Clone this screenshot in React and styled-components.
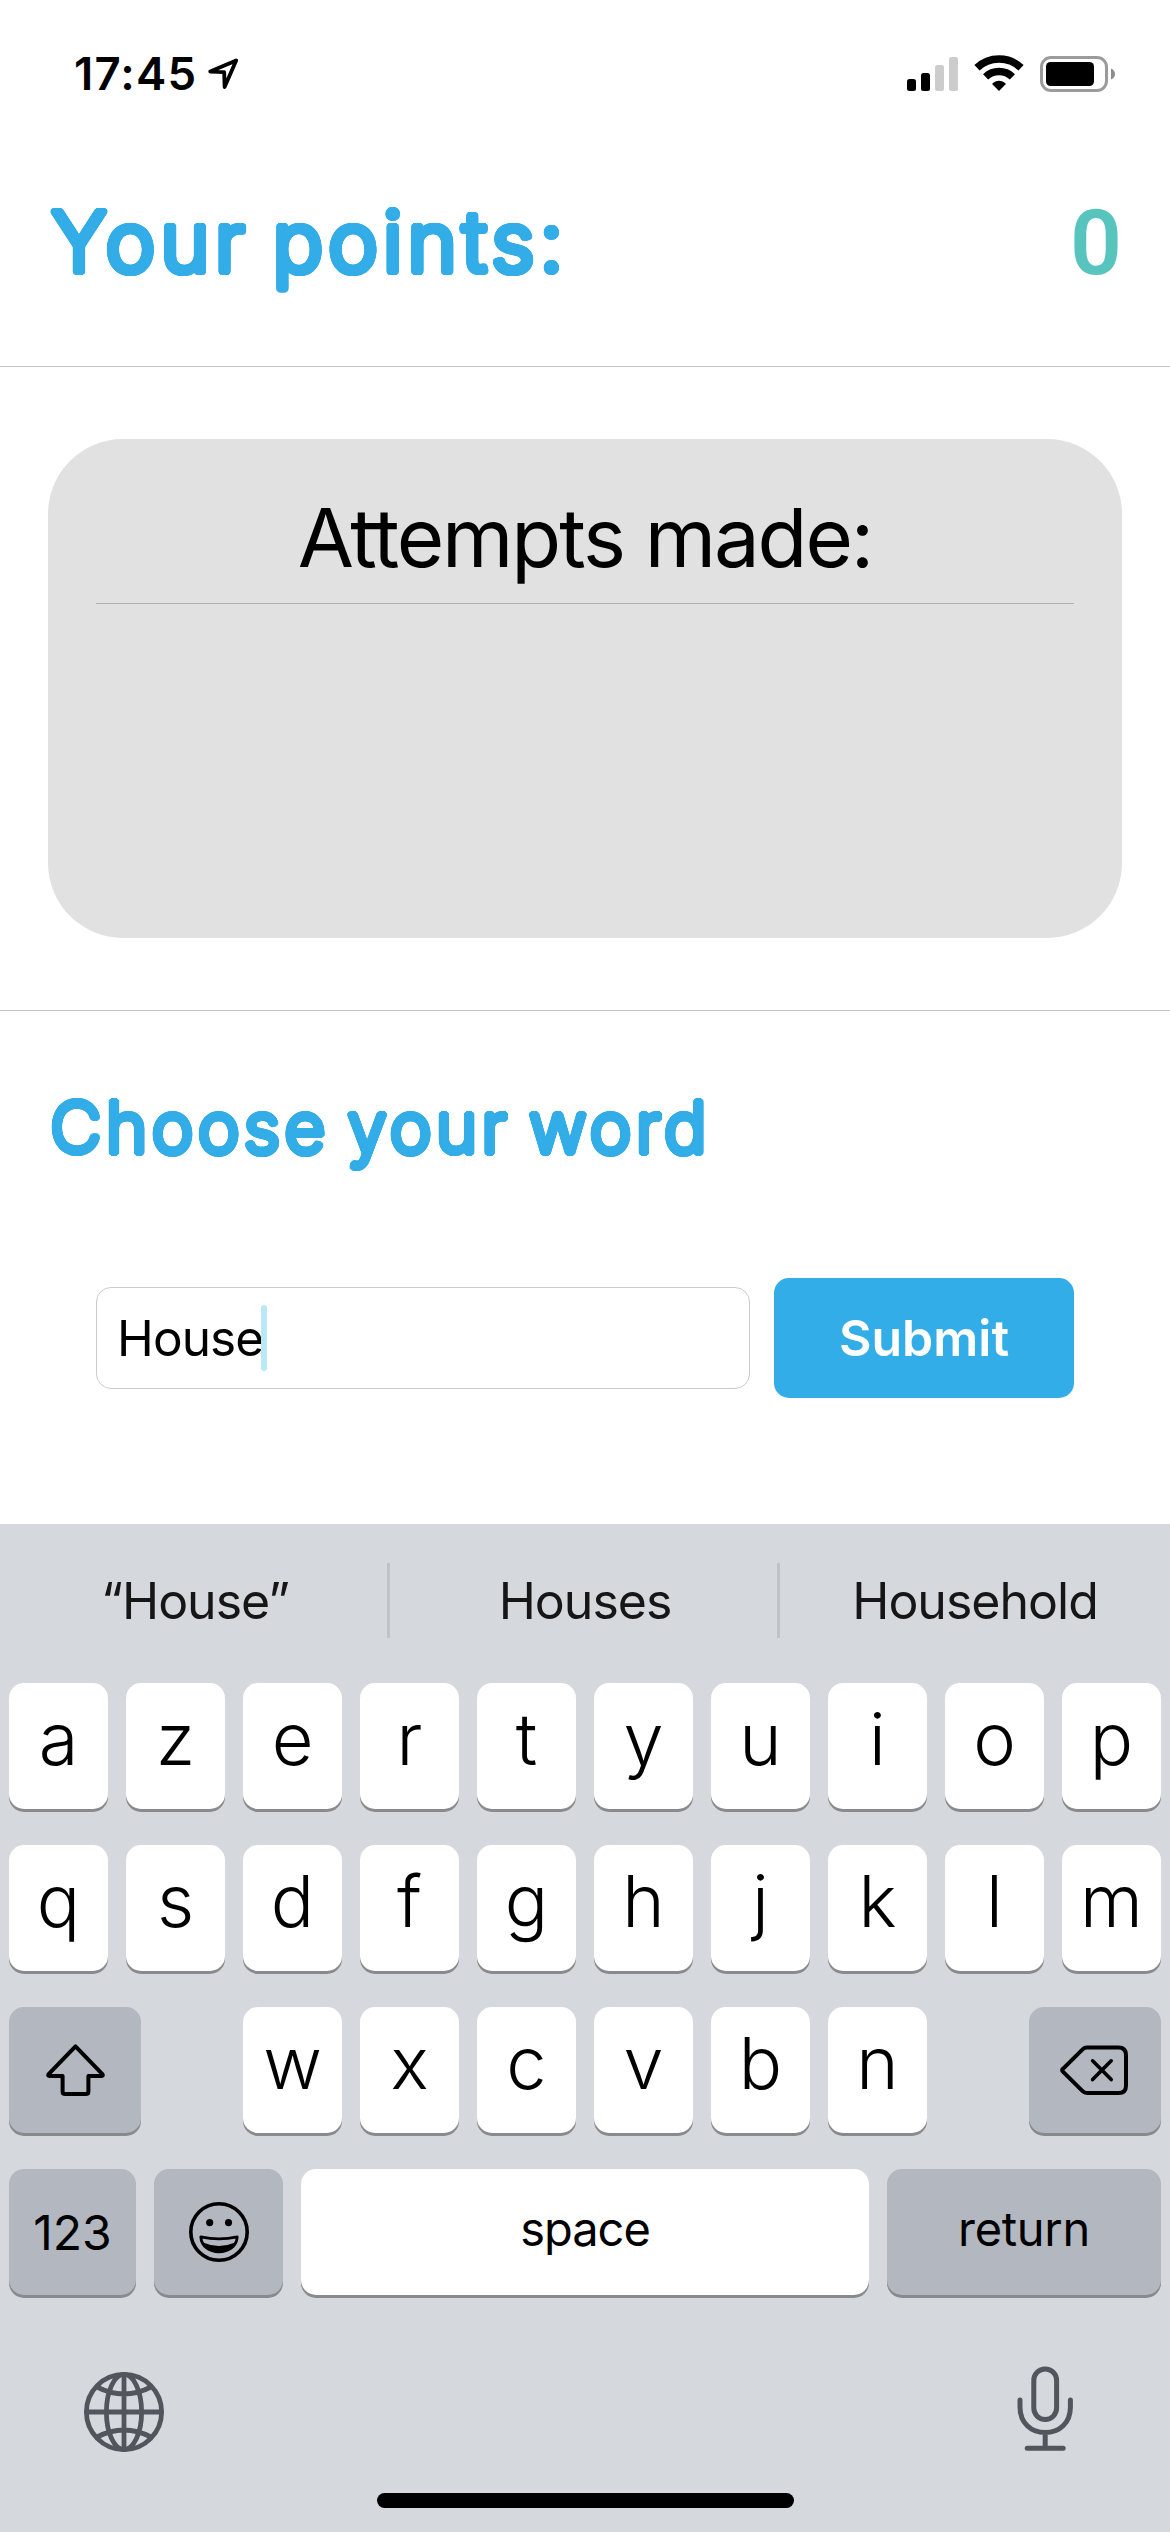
import React from "react";
import styled, { createGlobalStyle } from "styled-components";

const colors = {
  blue: "#33ade7",
  teal: "#58c4be",
  card: "#e1e1e1",
  divider: "#c6c6c8",
  keyboard: "#d5d8dd",
  key: "#ffffff",
  keyDark: "#b3b7c0",
  keyShadow: "#898a8d",
  glyph: "#52565c",
};

/* A ring of unblurred shadows thickens the strokes and rounds off their ends. */
const roundedStroke = (radius) =>
  Array.from({ length: 24 }, (_, i) => {
    const angle = (i / 24) * Math.PI * 2;
    const x = (Math.cos(angle) * radius).toFixed(2);
    const y = (Math.sin(angle) * radius).toFixed(2);
    return `${x}px ${y}px 0 currentColor`;
  }).join(", ");

const GlobalStyle = createGlobalStyle`
  * { box-sizing: border-box; }
  body {
    margin: 0;
    background: #fff;
    color: #000;
    font-family: Inter, "Liberation Sans", sans-serif;
  }
`;

const Screen = styled.div`
  display: flex;
  flex-direction: column;
  width: 1170px;
  height: 2532px;
  overflow: hidden;
  background: #fff;
`;

const StatusBar = styled.header`
  display: flex;
  align-items: center;
  justify-content: space-between;
  height: 148px;
  padding: 0 55px 0 74px;
`;

const StatusGroup = styled.div`
  display: flex;
  align-items: center;
  gap: ${(p) => p.$gap}px;
`;

const Clock = styled.span`
  font-size: 45.5px;
  font-weight: 600;
  line-height: 46px;
  letter-spacing: 1.2px;
`;

const Icon = styled.svg`
  display: block;
  flex: none;
  overflow: visible;
`;

const PointsHeader = styled.section`
  display: flex;
  align-items: flex-start;
  justify-content: space-between;
  height: 218px;
  padding: 44px 48px 0 51px;
`;

const RoundedTitle = styled.h1`
  margin: 0;
  color: ${colors.blue};
  font-size: ${(p) => p.$size}px;
  font-weight: 300;
  line-height: ${(p) => p.$line}px;
  letter-spacing: ${(p) => p.$spacing}px;
  word-spacing: -6px;
  white-space: nowrap;
  text-shadow: ${(p) => roundedStroke(p.$stroke)};
`;

const Score = styled.span`
  color: ${colors.teal};
  font-family: Roboto, sans-serif;
  font-size: 91px;
  font-weight: 600;
  line-height: 102px;
`;

const Divider = styled.hr`
  width: 100%;
  height: 1px;
  margin: 0;
  border: 0;
  flex: none;
  background: ${(p) => p.$color || colors.divider};
`;

const AttemptsCard = styled.section`
  display: flex;
  flex-direction: column;
  flex: none;
  gap: 15px;
  height: 499px;
  margin: 72px 48px;
  padding: 49px 48px 0;
  border-radius: 75px;
  background: ${colors.card};
`;

const CardTitle = styled.h2`
  margin: 0;
  font-size: 81.5px;
  font-weight: 400;
  line-height: 100px;
  letter-spacing: -2.1px;
  text-align: center;
`;

const WordSection = styled.section`
  display: flex;
  flex-direction: column;
  gap: 106px;
  height: 513px;
  padding: 71px 50px 0;
`;

const WordForm = styled.div`
  display: flex;
  align-items: center;
  gap: 24px;
  padding: 0 46px;
`;

const WordField = styled.div`
  display: flex;
  flex: 1;
  align-items: center;
  height: 102px;
  padding-left: 20px;
  border: 1px solid #cbcbcd;
  border-radius: 15px;
  font-size: 49.5px;
  letter-spacing: -0.9px;
`;

const Caret = styled.span`
  width: 6px;
  height: 66px;
  margin-left: -2px;
  border-radius: 3px;
  background: #b9e8f7;
`;

const SubmitButton = styled.button`
  width: 300px;
  height: 120px;
  padding: 0;
  border: 0;
  border-radius: 15px;
  background: ${colors.blue};
  color: #fff;
  font-family: inherit;
  font-size: 50px;
  font-weight: 600;
`;

const Keyboard = styled.section`
  display: flex;
  flex: 1;
  flex-direction: column;
  background: ${colors.keyboard};
`;

const Suggestions = styled.div`
  display: grid;
  grid-template-columns: repeat(3, 1fr);
  height: 159px;
  padding-top: 39px;
`;

const Suggestion = styled.span`
  display: flex;
  align-items: center;
  justify-content: center;
  height: 75px;
  padding-left: 3px;
  border-right: 3px solid #c0c2c7;
  color: #161616;
  font-size: 50px;
  letter-spacing: -1px;

  &:last-child { border-right-color: transparent; }
`;

const KeyRows = styled.div`
  display: flex;
  flex-direction: column;
  gap: 36px;
  padding: 0 9px;
`;

const KeyRow = styled.div`
  display: flex;
  justify-content: space-between;
`;

const KeyGroup = styled.div`
  display: flex;
  gap: 18px;
`;

const Key = styled.button`
  display: flex;
  align-items: center;
  justify-content: center;
  width: ${(p) => p.$width || 99}px;
  height: 126px;
  padding: 0 0 ${(p) => p.$lift || 0}px;
  border: 0;
  border-radius: 15px;
  background: ${(p) => (p.$dark ? colors.keyDark : colors.key)};
  box-shadow: 0 3px 0 ${colors.keyShadow};
  color: #000;
  font-family: inherit;
  font-size: ${(p) => p.$size || 72}px;
  font-weight: ${(p) => p.$weight || 350};
  letter-spacing: ${(p) => p.$spacing || 0}px;
`;

const KeyboardFooter = styled.div`
  display: flex;
  align-items: flex-start;
  justify-content: space-between;
  height: 127px;
  margin-top: 71px;
  padding: 0 97px 0 84px;
`;

const GlobeSlot = styled.div`
  padding-top: 6px;
`;

const HomeIndicator = styled.div`
  align-self: center;
  width: 417px;
  height: 15px;
  border-radius: 8px;
  background: #000;
`;

const stroke = (width, color = "#000") => ({
  fill: "none",
  stroke: color,
  strokeWidth: width,
  strokeLinecap: "round",
  strokeLinejoin: "round",
});

const LocationIcon = () => (
  <Icon width="32" height="34" viewBox="0 0 32 34">
    <path d="M29.2 3.4 3.2 14.6 17.2 15.2 17.6 30Z" {...stroke(3.8)} />
  </Icon>
);

const SignalIcon = () => (
  <Icon width="51" height="34" viewBox="0 0 51 34">
    <rect x="0" y="22" width="9" height="12" rx="2.5" />
    <rect x="14" y="16" width="9" height="18" rx="2.5" />
    <rect x="28" y="8" width="9" height="26" rx="2.5" fill="#ccc" />
    <rect x="42" y="0" width="9" height="34" rx="2.5" fill="#ccc" />
  </Icon>
);

const WifiIcon = () => (
  <Icon width="48" height="38" viewBox="0 0 48 38">
    <path d="M2 12.8A32 32 0 0 1 46 12.8" fill="none" stroke="#000" strokeWidth="7.6" />
    <path d="M10.6 21.9A19.5 19.5 0 0 1 37.4 21.9" fill="none" stroke="#000" strokeWidth="7.4" />
    <path d="M24 36 17.6 29.6Q17 28.6 17.9 27.9A10.5 10.5 0 0 1 30.1 27.9Q31 28.6 30.4 29.6Z" />
  </Icon>
);

const BatteryIcon = () => (
  <Icon width="75" height="36" viewBox="0 0 75 36">
    <rect x="1.5" y="1.5" width="65" height="33" rx="9.5" fill="none" stroke="#9b9b9b" strokeWidth="3" />
    <rect x="6" y="6" width="48" height="24" rx="4.5" />
    <path d="M71 12.5Q75 14.5 75 18T71 23.5Z" fill="#8c8c8c" />
  </Icon>
);

const ShiftIcon = () => (
  <Icon width="61" height="55" viewBox="0 0 61 55">
    <path
      d="M30.5 3.4 3.4 31.4Q2.6 32.8 4.4 32.9H17.6V48.4Q17.6 51 20.2 51H40.8Q43.4 51 43.4 48.4V32.9H56.6Q58.4 32.8 57.6 31.4Z"
      {...stroke(4)}
    />
  </Icon>
);

const DeleteIcon = () => (
  <Icon width="72" height="52" viewBox="0 0 72 52">
    <path
      d="M28 3.4H59.5Q67 3.4 67 11V41.4Q67 49 59.5 49H28Q25.5 49 23.6 47.1L3.9 27.6Q2.4 26.2 3.9 24.8L23.6 5.3Q25.5 3.4 28 3.4Z"
      {...stroke(4)}
    />
    <path d="M33.6 16.8 52.2 35.6M52.2 16.8 33.6 35.6" {...stroke(3.6)} />
  </Icon>
);

const EmojiIcon = () => (
  <Icon width="60" height="60" viewBox="0 0 60 60">
    <circle cx="30" cy="30" r="28.2" {...stroke(3.6)} />
    <circle cx="20.7" cy="20.6" r="3.6" />
    <circle cx="39.5" cy="20.6" r="3.6" />
    <path d="M11.8 34.9Q30 39 48.2 34.9C47.6 44.5 39.5 49.8 30 49.8S12.4 44.5 11.8 34.9Z" {...stroke(2.8)} />
    <path d="M13.2 40.2Q30 47.6 46.8 40.2C44 47.4 37.5 50.4 30 50.4S16 47.4 13.2 40.2Z" />
  </Icon>
);

const GlobeIcon = () => (
  <Icon width="80" height="80" viewBox="0 0 80 80">
    <g {...stroke(4.8, colors.glyph)}>
      <circle cx="40" cy="40" r="37.6" />
      <ellipse cx="40" cy="40" rx="17.6" ry="37.6" />
      <path d="M40 2.4V77.6M2.4 40H77.6M13 15Q40 29 67 15M13 65Q40 51 67 65" />
    </g>
  </Icon>
);

const MicIcon = () => (
  <Icon width="56" height="86" viewBox="0 0 56 86">
    <g {...stroke(5, colors.glyph)}>
      <rect x="16.8" y="3" width="22.8" height="50.5" rx="11.4" />
      <path d="M3 34V41C3 57 14 66.6 28.2 66.6S53.4 57 53.4 41V34M28.2 66.6V82.3M10.2 82.3H46.2" />
    </g>
  </Icon>
);

const Letters = ({ letters }) =>
  letters.split("").map((letter) => (
    <Key key={letter} $lift={16}>
      {letter}
    </Key>
  ));

export default function App() {
  return (
    <>
      <GlobalStyle />
      <Screen>
        <StatusBar>
          <StatusGroup $gap={10}>
            <Clock>17:45</Clock>
            <LocationIcon />
          </StatusGroup>
          <StatusGroup $gap={17}>
            <SignalIcon />
            <WifiIcon />
            <BatteryIcon />
          </StatusGroup>
        </StatusBar>

        <PointsHeader>
          <RoundedTitle $size={84} $line={100} $spacing={5} $stroke={3.2}>
            Your points:
          </RoundedTitle>
          <Score>0</Score>
        </PointsHeader>
        <Divider />

        <AttemptsCard>
          <CardTitle>Attempts made:</CardTitle>
          <Divider $color="#b0b0b1" />
        </AttemptsCard>
        <Divider />

        <WordSection>
          <RoundedTitle as="h2" $size={71} $line={90} $spacing={4} $stroke={2.7}>
            Choose your word
          </RoundedTitle>
          <WordForm>
            <WordField>
              House
              <Caret />
            </WordField>
            <SubmitButton>Submit</SubmitButton>
          </WordForm>
        </WordSection>

        <Keyboard>
          <Suggestions>
            <Suggestion>“House”</Suggestion>
            <Suggestion>Houses</Suggestion>
            <Suggestion>Household</Suggestion>
          </Suggestions>
          <KeyRows>
            <KeyRow>
              <Letters letters="azertyuiop" />
            </KeyRow>
            <KeyRow>
              <Letters letters="qsdfghjklm" />
            </KeyRow>
            <KeyRow>
              <Key $dark $width={132}>
                <ShiftIcon />
              </Key>
              <KeyGroup>
                <Letters letters="wxcvbn" />
              </KeyGroup>
              <Key $dark $width={132}>
                <DeleteIcon />
              </Key>
            </KeyRow>
            <KeyRow>
              <Key $dark $width={127} $size={48} $weight={400}>
                123
              </Key>
              <Key $dark $width={129}>
                <EmojiIcon />
              </Key>
              <Key $width={568} $size={47} $weight={400} $spacing={-1} $lift={8}>
                space
              </Key>
              <Key $dark $width={274} $size={47} $weight={400} $spacing={-0.3} $lift={8}>
                return
              </Key>
            </KeyRow>
          </KeyRows>
          <KeyboardFooter>
            <GlobeSlot>
              <GlobeIcon />
            </GlobeSlot>
            <MicIcon />
          </KeyboardFooter>
          <HomeIndicator />
        </Keyboard>
      </Screen>
    </>
  );
}
